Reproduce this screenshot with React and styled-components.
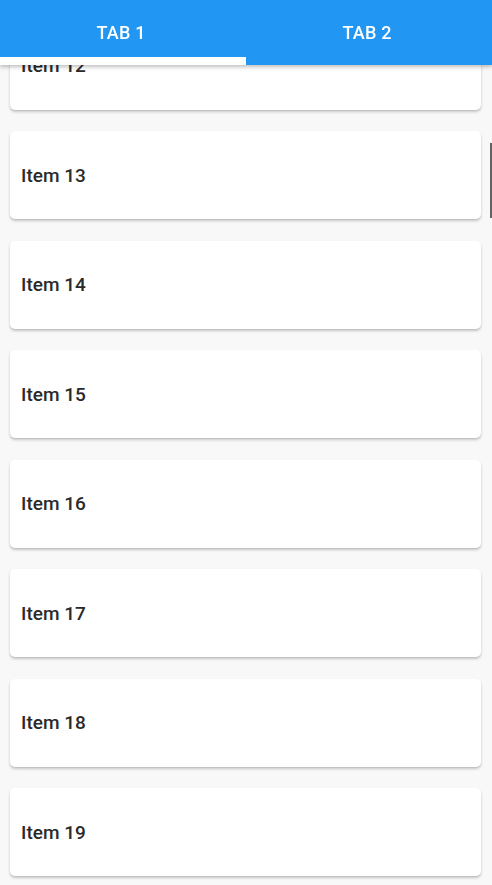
import React, { useLayoutEffect, useRef, useState } from 'react';
import styled, { createGlobalStyle } from 'styled-components';

const GlobalStyle = createGlobalStyle`
    html, body {
        margin: 0;
        padding: 0;
        height: 100%;
        background-color: #F8F8F8;
        font-family: Roboto, "Liberation Sans", Arial, sans-serif;
    }
    #root {
        height: 100%;
    }
`;

const Screen = styled.div`
    position: relative;
    height: 885px;
    overflow: hidden;
    background-color: #F8F8F8;
`;

const Scroller = styled.div`
    height: 100%;
    overflow: hidden;
`;

const TabBar = styled.div`
    position: sticky;
    top: 0;
    z-index: 2;
    height: 65px;
    display: flex;
    background-color: #2196F3;
    box-shadow: 0 2px 4px rgba(0, 0, 0, 0.25);
`;

const Tab = styled.button`
    position: relative;
    flex: 1;
    display: flex;
    align-items: center;
    justify-content: center;
    padding: 0 4px 0 0;
    border: none;
    background: transparent;
    color: #FFFFFF;
    font-family: Roboto, "Liberation Sans", Arial, sans-serif;
    font-size: 18px;
    font-weight: 500;
    letter-spacing: 0.2px;
    cursor: pointer;

    &::after {
        content: '';
        position: absolute;
        left: 0;
        right: 0;
        bottom: 0;
        height: 8px;
        background-color: ${(props) => (props.$active ? '#FFFFFF' : 'transparent')};
    }
`;

const List = styled.div`
    display: flex;
    flex-direction: column;
    gap: 21.5px;
    padding: 10px 11px 10px 10px;
`;

const Card = styled.div`
    height: 88px;
    display: flex;
    align-items: center;
    padding: 0 11px;
    background-color: #FFFFFF;
    border-radius: 5px;
    box-shadow: 0 1px 1px rgba(0, 0, 0, 0.06), 0 2px 3px rgba(0, 0, 0, 0.2);
    font-size: 19px;
    font-weight: 500;
    color: #2a2a2a;
`;

const ScrollThumb = styled.div`
    position: absolute;
    top: 143px;
    right: 0;
    width: 2px;
    height: 75px;
    background-color: rgba(60, 60, 60, 0.8);
`;

const items = Array.from({ length: 24 }, (_, i) => `Item ${i + 1}`);

const App = () => {
    const [tab, setTab] = useState(0);
    const scrollRef = useRef(null);

    useLayoutEffect(() => {
        if (scrollRef.current) {
            scrollRef.current.scrollTop = 1258;
        }
    }, []);

    return (
        <>
            <GlobalStyle />
            <Screen>
                <Scroller ref={scrollRef}>
                    <TabBar>
                        <Tab $active={tab === 0} onClick={() => setTab(0)}>TAB 1</Tab>
                        <Tab $active={tab === 1} onClick={() => setTab(1)}>TAB 2</Tab>
                    </TabBar>
                    <List>
                        {items.map((item) => (
                            <Card key={item}>{item}</Card>
                        ))}
                    </List>
                </Scroller>
                <ScrollThumb />
            </Screen>
        </>
    );
};

export default App;
